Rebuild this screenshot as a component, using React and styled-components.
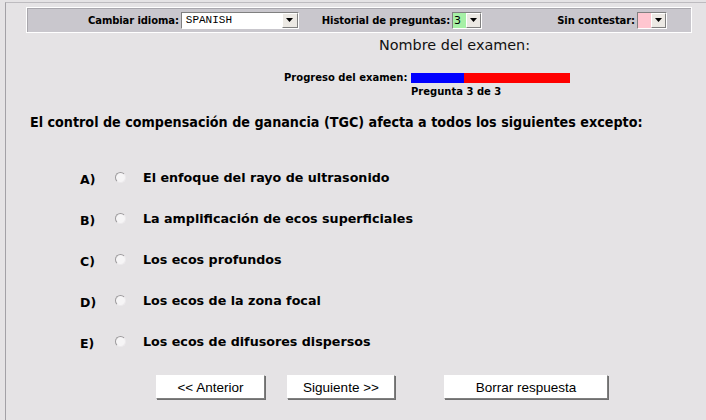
import React from "react";
import styled, { createGlobalStyle } from "styled-components";

const GlobalStyle = createGlobalStyle`
  html, body {
    margin: 0;
    padding: 0;
    background: #e5e3e5;
    overflow: hidden;
  }
`;

const options = [
  { letter: "A)", text: "El enfoque del rayo de ultrasonido" },
  { letter: "B)", text: "La amplificación de ecos superficiales" },
  { letter: "C)", text: "Los ecos profundos" },
  { letter: "D)", text: "Los ecos de la zona focal" },
  { letter: "E)", text: "Los ecos de difusores dispersos" },
];

function Select({ value, width, cell, mono }) {
  return (
    <SelectBox $width={width}>
      <SelectValue $cell={cell} $mono={mono}>
        {value}
      </SelectValue>
      <SelectButton>
        <svg width="7" height="4" viewBox="0 0 7 4">
          <path d="M0 0h7L3.5 4z" fill="#000" />
        </svg>
      </SelectButton>
    </SelectBox>
  );
}

function App() {
  return (
    <>
      <GlobalStyle />
      <Frame>
        <Toolbar>
          <Group>
            <Label>Cambiar idioma:</Label>
            <Select value="SPANISH" width={118} mono />
          </Group>
          <Group $offset="23px">
            <Label>Historial de preguntas:</Label>
            <Select value="3" width={30} cell="#a6f0a6" />
          </Group>
          <Group $offset="auto">
            <Label>Sin contestar:</Label>
            <Select value="" width={30} cell="#ffc6d0" />
          </Group>
        </Toolbar>

        <ExamName>Nombre del examen:</ExamName>

        <ProgressRow>
          <SmallBold>Progreso del examen:</SmallBold>
          <Bar>
            <BarFill style={{ width: "33%" }} />
          </Bar>
        </ProgressRow>
        <Counter>Pregunta 3 de 3</Counter>

        <Question>
          El control de compensación de ganancia (TGC) afecta a todos los
          siguientes excepto:
        </Question>

        <Options>
          {options.map((o) => (
            <Option key={o.letter}>
              <Letter>{o.letter}</Letter>
              <Radio />
              <OptionText>{o.text}</OptionText>
            </Option>
          ))}
        </Options>

        <Buttons>
          <Button $width={109}>&lt;&lt; Anterior</Button>
          <Button $width={108}>Siguiente &gt;&gt;</Button>
          <Button $width={164} $gap={49}>
            Borrar respuesta
          </Button>
        </Buttons>
      </Frame>
    </>
  );
}

export default App;

const Frame = styled.div`
  margin: 2px 0 0 5px;
  height: 420px;
  border-left: 1px solid #a3a1a6;
  border-top: 1px solid #bdbbbf;
  box-sizing: border-box;
  font-family: "DejaVu Sans", Verdana, sans-serif;
  color: #000;
`;

const Toolbar = styled.div`
  margin: 4px 14px 0 20px;
  height: 26px;
  box-sizing: border-box;
  background: #c9c7cd;
  border: 1px solid #fff;
  box-shadow: inset 1px 1px 0 #a9a7ad;
  display: flex;
  align-items: center;
  padding: 0 24px 0 61px;
`;

const Group = styled.div`
  display: flex;
  align-items: center;
  gap: 2px;
  margin-left: ${(p) => p.$offset || 0};
`;

const Label = styled.span`
  font-size: 10px;
  font-weight: bold;
  letter-spacing: -0.1px;
`;

const SelectBox = styled.div`
  width: ${(p) => p.$width}px;
  height: 17px;
  box-sizing: border-box;
  background: #fff;
  border-top: 1px solid #808080;
  border-left: 1px solid #808080;
  border-right: 1px solid #fff;
  border-bottom: 1px solid #fff;
  display: flex;
  align-items: stretch;
`;

const SelectValue = styled.div`
  flex: ${(p) => (p.$cell ? "0 0 auto" : "1")};
  min-width: 11px;
  padding: 0 ${(p) => (p.$mono ? "4px" : "1px")};
  background: ${(p) => p.$cell || "#fff"};
  font-family: ${(p) =>
    p.$mono ? '"Liberation Mono", monospace' : '"DejaVu Sans", sans-serif'};
  font-size: 11px;
  line-height: 15px;
  color: #000;
  margin-right: auto;
`;

const SelectButton = styled.div`
  width: 16px;
  box-sizing: border-box;
  background: #ece9e4;
  border-top: 1px solid #fff;
  border-left: 1px solid #fff;
  border-right: 1px solid #808080;
  border-bottom: 1px solid #808080;
  display: flex;
  align-items: center;
  justify-content: center;
`;

const ExamName = styled.div`
  margin: 3px 0 0 373px;
  font-size: 14.4px;
  line-height: 18px;
  color: #111;
`;

const ProgressRow = styled.div`
  margin: 18px 0 0 278px;
  display: flex;
  align-items: center;
  gap: 4px;
`;

const SmallBold = styled.span`
  font-size: 10px;
  font-weight: bold;
  line-height: 12px;
`;

const Bar = styled.div`
  width: 159px;
  height: 10px;
  background: #fe0000;
`;

const BarFill = styled.div`
  height: 100%;
  background: #0000fe;
`;

const Counter = styled(SmallBold)`
  display: block;
  margin: 2px 0 0 405px;
`;

const Question = styled.div`
  margin: 15px 0 0 24px;
  font-family: "DejaVu Sans Condensed", "DejaVu Sans", sans-serif;
  font-size: 14.2px;
  font-weight: bold;
  line-height: 18px;
`;

const Options = styled.div`
  margin: 38px 0 0 74px;
  display: flex;
  flex-direction: column;
  gap: 25px;
`;

const Option = styled.div`
  display: flex;
  align-items: center;
  height: 16px;
`;

const Letter = styled.span`
  width: 35px;
  font-size: 12.5px;
  font-weight: bold;
  padding-top: 4px;
`;

const Radio = styled.span`
  width: 11px;
  height: 11px;
  box-sizing: border-box;
  border-radius: 50%;
  background: #f6f5f6;
  border: 1px solid;
  border-color: #9c9a9c #eceaec #eceaec #9c9a9c;
  margin-right: 17px;
`;

const OptionText = styled.span`
  font-size: 12.7px;
  font-weight: bold;
`;

const Buttons = styled.div`
  margin: 26px 0 0 150px;
  display: flex;
  gap: 22px;
`;

const Button = styled.button`
  width: ${(p) => p.$width}px;
  height: 24px;
  margin-left: ${(p) => (p.$gap ? p.$gap - 22 : 0)}px;
  background: #fff;
  border: 1px solid;
  border-color: #fff #7f7f7f #7f7f7f #fff;
  box-shadow: 1px 1px 0 #6f6f6f;
  font-family: "Liberation Sans", Arial, sans-serif;
  font-size: 13.5px;
  color: #000;
  padding: 0;
`;
